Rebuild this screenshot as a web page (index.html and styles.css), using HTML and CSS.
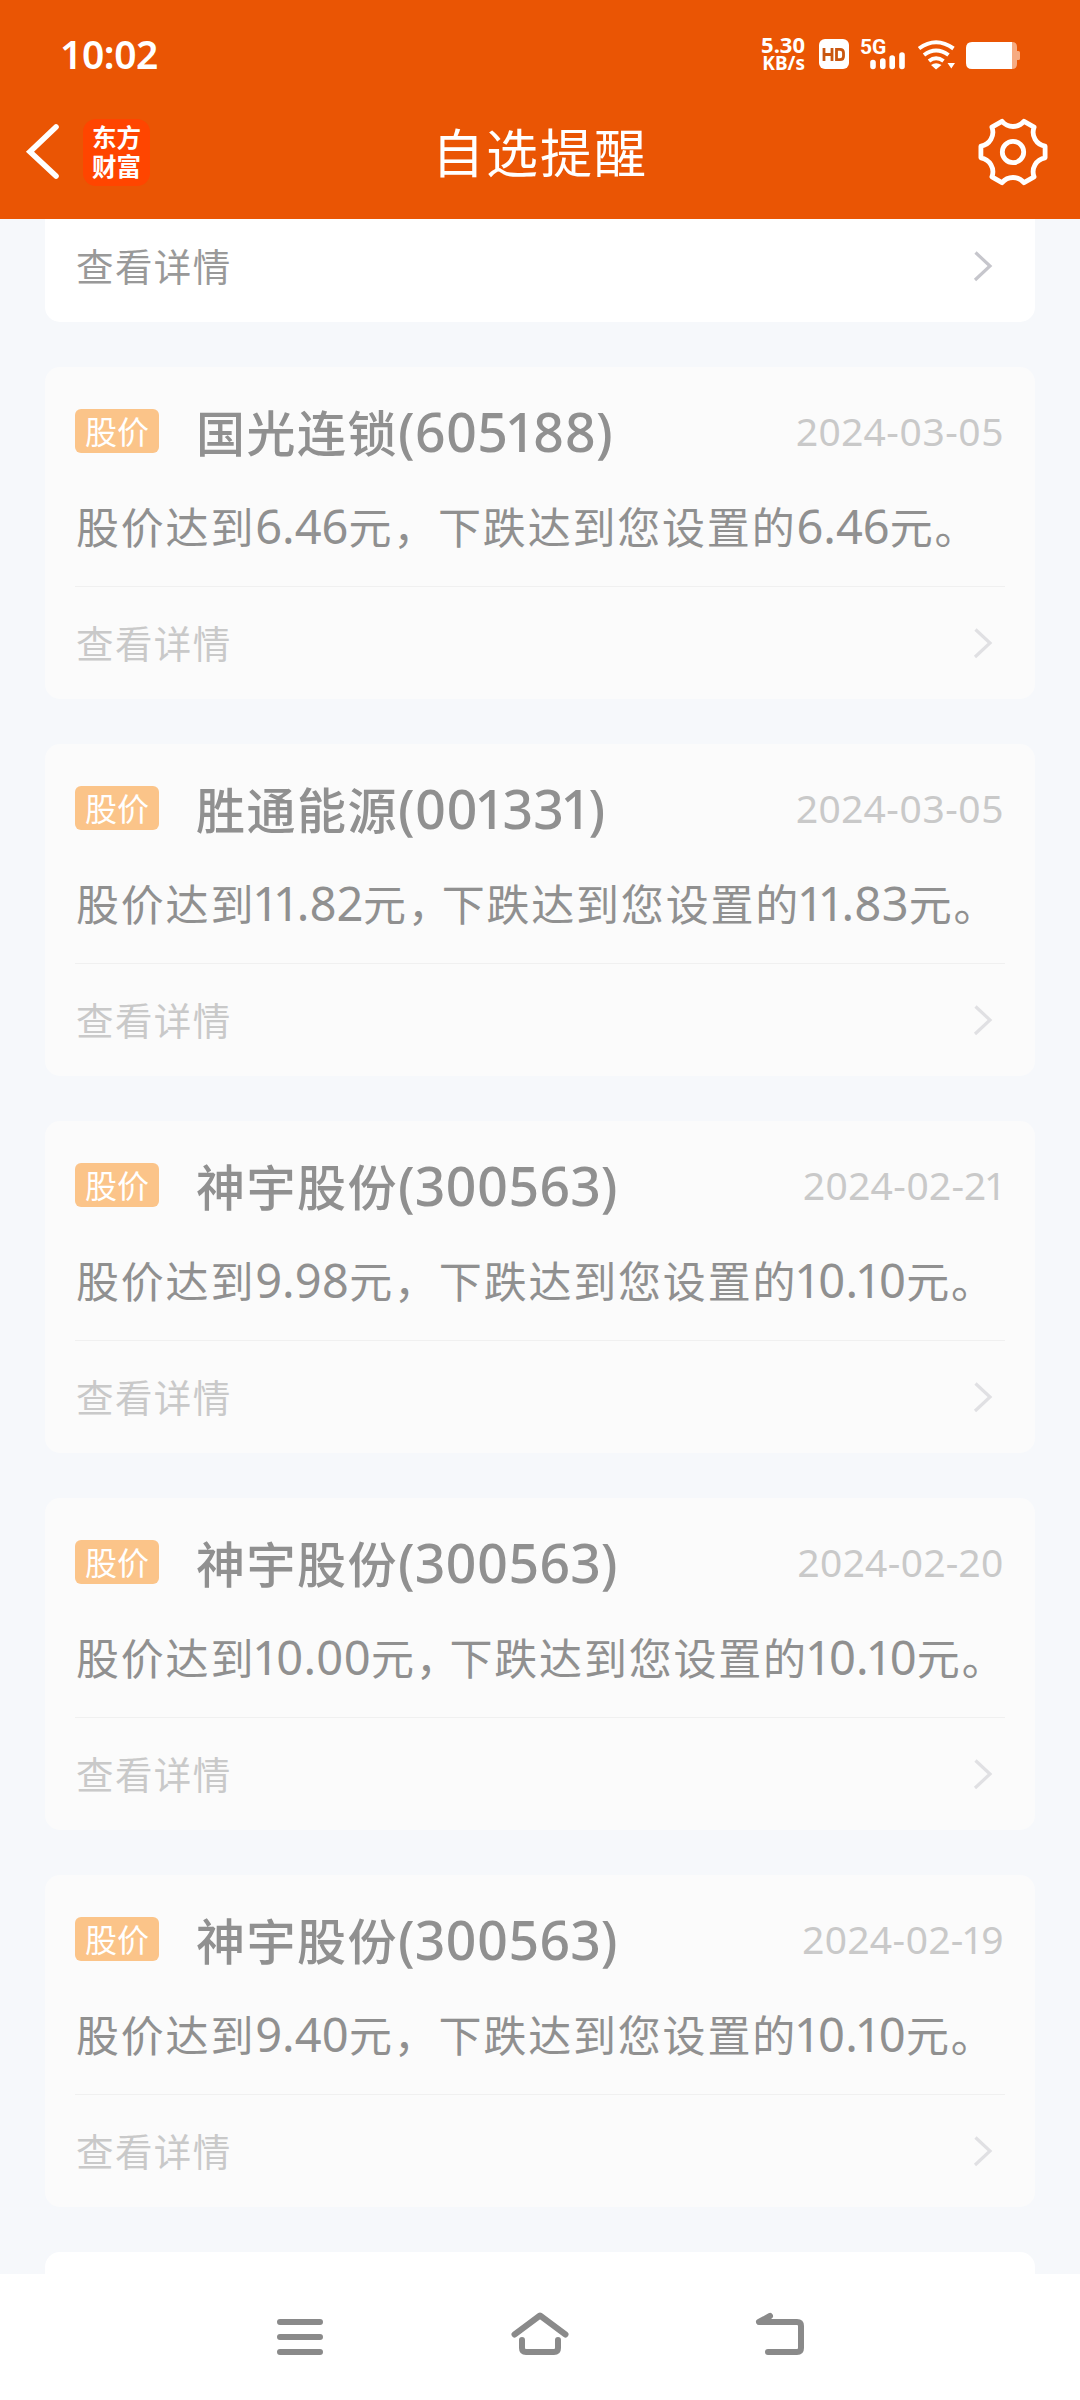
FILE: index.html
```html
<!DOCTYPE html>
<html lang="zh-CN">
<head>
<meta charset="utf-8">
<title>自选提醒</title>
<link rel="stylesheet" href="styles.css">
</head>
<body>
<div class="screen">
  <header class="header">
    <div class="status">
      <span class="clock">10:02</span>
      <div class="speed"><span class="speed-value">5.30</span><span class="speed-unit">KB/s</span></div>
      <svg class="status-icons" width="262" height="40" viewBox="818 34 262 40">
        <rect x="819" y="39" width="30" height="30" rx="6" fill="#fff"/>
        <path d="M824 48v13M832 48v13M824 54.5h8M836.500 49.300h3.500q3.500 0 3.500 3.500v3.400q0 3.500-3.500 3.500h-3.500z" fill="none" stroke="#c9560f" stroke-width="2.800"/>
        <text x="860" y="54" class="net">5G</text>
        <path d="M873 62.500v4M882.800 61v5.500M892.200 58v8.500M902 55v11.500" stroke="#fff" stroke-width="5.600" stroke-linecap="round" fill="none"/>
        <g fill="none" stroke="#fff" stroke-width="4">
          <path d="M919 48.500Q936 36 953.500 48.500"/>
          <path d="M924 55Q936 46 948.500 55"/>
          <path d="M929 61Q936 55.500 943.500 61"/>
        </g>
        <path d="M931 65Q936 61.500 941.500 65L936 69.500zM947.500 63h7.500l-3.700 5.500z" fill="#fff"/>
        <path d="M1011 42h1q5 0 5 5v4h1.500q1.500 0 1.500 1.500v6q0 1.500-1.500 1.500h-1.500v4q0 5-5 5h-1z" fill="#f6ab82"/>
        <path d="M1012 42h-40q-6 0-6 6v15q0 6 6 6h40z" fill="#fff"/>
      </svg>
    </div>
    <div class="titlebar">
      <div class="side">
        <svg width="40" height="60" viewBox="22 122 40 60"><path d="M56 127L30 151.700L56 176" fill="none" stroke="#fff" stroke-width="5.600" stroke-linecap="round"/></svg>
        <div class="logo"><span>东方</span><span>财富</span></div>
      </div>
      <h1 class="title">自选提醒</h1>
      <div class="side side-end">
        <svg width="72" height="72" viewBox="-36 -36 72 72" fill="none" stroke="#fff" stroke-width="4.800" stroke-linejoin="round">
          <circle r="10.700"/>
          <path d="M-11-30.700A14.200 14.200 0 0 0 11-30.700L21.100-24.900A14.200 14.200 0 0 0 32.100-5.800V5.800A14.200 14.200 0 0 0 21.100 24.900L11 30.700A14.200 14.200 0 0 0-11 30.700L-21.100 24.900A14.200 14.200 0 0 0-32.100 5.800V-5.800A14.200 14.200 0 0 0-21.100-24.900Z"/>
        </svg>
      </div>
    </div>
  </header>

  <main class="list">
    <section class="card card-tail">
      <div class="more"><span>查看详情</span><svg class="chev" width="20" height="32" viewBox="0 0 20 32"><path d="M2.500 2.500L17 16L2 30"/></svg></div>
    </section>

    <section class="card read">
      <div class="head"><span class="tag">股价</span><h2>国光连锁<span class="num">(605188)</span></h2><time>2024-03-05</time></div>
      <p>股价达到<span class="num">6.46</span>元，下跌达到您设置的<span class="num">6.46</span>元。</p>
      <div class="more"><span>查看详情</span><svg class="chev" width="20" height="32" viewBox="0 0 20 32"><path d="M2.500 2.500L17 16L2 30"/></svg></div>
    </section>

    <section class="card read">
      <div class="head"><span class="tag">股价</span><h2>胜通能源<span class="num">(001331)</span></h2><time>2024-03-05</time></div>
      <p>股价达到<span class="num">11.82</span>元<span class="tight">，</span>下跌达到您设置的<span class="num">11.83</span>元。</p>
      <div class="more"><span>查看详情</span><svg class="chev" width="20" height="32" viewBox="0 0 20 32"><path d="M2.500 2.500L17 16L2 30"/></svg></div>
    </section>

    <section class="card read">
      <div class="head"><span class="tag">股价</span><h2>神宇股份<span class="num">(300563)</span></h2><time>2024-02-21</time></div>
      <p>股价达到<span class="num">9.98</span>元，下跌达到您设置的<span class="num">10.10</span>元。</p>
      <div class="more"><span>查看详情</span><svg class="chev" width="20" height="32" viewBox="0 0 20 32"><path d="M2.500 2.500L17 16L2 30"/></svg></div>
    </section>

    <section class="card read">
      <div class="head"><span class="tag">股价</span><h2>神宇股份<span class="num">(300563)</span></h2><time>2024-02-20</time></div>
      <p>股价达到<span class="num">10.00</span>元<span class="tight">，</span>下跌达到您设置的<span class="num">10.10</span>元。</p>
      <div class="more"><span>查看详情</span><svg class="chev" width="20" height="32" viewBox="0 0 20 32"><path d="M2.500 2.500L17 16L2 30"/></svg></div>
    </section>

    <section class="card read">
      <div class="head"><span class="tag">股价</span><h2>神宇股份<span class="num">(300563)</span></h2><time>2024-02-19</time></div>
      <p>股价达到<span class="num">9.40</span>元，下跌达到您设置的<span class="num">10.10</span>元。</p>
      <div class="more"><span>查看详情</span><svg class="chev" width="20" height="32" viewBox="0 0 20 32"><path d="M2.500 2.500L17 16L2 30"/></svg></div>
    </section>

    <section class="card card-next"></section>
  </main>

  <nav class="nav">
    <svg width="60" height="60" viewBox="270 2304 60 60"><path d="M280 2322h40M280 2337h40M280 2352h40"/></svg>
    <svg width="60" height="60" viewBox="510 2304 60 60"><path d="M514.500 2334.500L540 2315.500L565.500 2334.500M522 2340v8q0 4 4 4h28q4 0 4-4v-8"/></svg>
    <svg width="60" height="60" viewBox="750 2304 60 60"><path d="M770 2316L759 2322H797q4 0 4 4v22q0 4-4 4H768"/></svg>
  </nav>
</div>
</body>
</html>
```
FILE: styles.css
```css
* { box-sizing: border-box; }
body {
  margin: 0;
  background: #f6f8fb;
  font-family: "Noto Sans CJK SC", sans-serif;
}
h1, h2, p { margin: 0; }
svg { display: block; flex: none; }
.screen {
  width: 1080px;
  height: 2400px;
  display: flex;
  flex-direction: column;
  overflow: hidden;
}

.header {
  height: 219px;
  flex: none;
  background: #ea5504;
  color: #fff;
}
.status {
  height: 108px;
  display: flex;
  align-items: center;
  padding-left: 60px;
}
.clock {
  flex: 1;
  font: 600 39px/40px "Noto Sans", sans-serif;
  letter-spacing: -0.4px;
}
.speed {
  display: flex;
  flex-direction: column;
  align-items: flex-end;
  margin: 0 13px 2px 0;
  font-family: "Noto Sans", sans-serif;
  font-weight: 700;
}
.speed-value { font-size: 22px; line-height: 19px; }
.speed-unit { font-size: 19px; line-height: 18px; }
.net { font: 700 21px Roboto, sans-serif; fill: #fff; }
.titlebar {
  height: 88px;
  display: flex;
  align-items: center;
  justify-content: space-between;
}
.side {
  width: 300px;
  padding-left: 22px;
  display: flex;
  align-items: center;
  gap: 21px;
}
.side-end {
  justify-content: flex-end;
  padding: 0 31px 0 0;
}
.logo {
  width: 67px;
  height: 67px;
  padding-bottom: 3px;
  border-radius: 13px;
  background: #ff4500;
  display: flex;
  flex-direction: column;
  align-items: center;
  justify-content: center;
  font-size: 24.5px;
  line-height: 29px;
  font-weight: 700;
}
.title {
  font-size: 52px;
  line-height: 86px;
  padding-bottom: 2px;
  font-weight: 400;
  letter-spacing: 2px;
}

.list {
  height: 2055px;
  flex: none;
  padding: 0 45px;
  display: flex;
  flex-direction: column;
  gap: 45px;
  overflow: hidden;
}
.card {
  flex: none;
  height: 332px;
  padding: 0 30px;
  border-radius: 15px;
  background: #fff;
  color: #999;
}
.card-tail {
  height: 103px;
  display: flex;
  flex-direction: column;
  justify-content: flex-end;
  border-radius: 0 0 15px 15px;
}
.card-next { height: 60px; }
.read {
  background: #fbfbfb;
  color: #909090;
  padding-top: 31px;
}
.head {
  height: 66px;
  display: flex;
  align-items: center;
}
.tag {
  width: 84px;
  height: 44px;
  border-radius: 6px;
  background: #fbc489;
  color: #fff;
  font-size: 32px;
  line-height: 42px;
  text-align: center;
}
h2 {
  flex: 1;
  margin-left: 37px;
  font-size: 49px;
  line-height: 66px;
  font-weight: 500;
  letter-spacing: 1.5px;
  white-space: nowrap;
}
.num {
  font-family: "Noto Sans", sans-serif;
  font-variant-numeric: proportional-nums;
  letter-spacing: 0;
}
h2 .num { font-size: 53.5px; }
p .num { font-size: 47px; }
time {
  font: 400 39px/66px "Noto Sans", sans-serif;
  font-variant-numeric: proportional-nums;
  letter-spacing: 0.4px;
  margin-right: 1px;
  color: #c9c9c9;
}
p {
  height: 122px;
  padding-left: 1px;
  font-size: 43px;
  line-height: 122px;
  letter-spacing: 1.8px;
  white-space: nowrap;
}
.tight {
  font-feature-settings: "halt";
  margin-right: 10.5px;
}
.more {
  height: 112px;
  flex: none;
  display: flex;
  align-items: center;
  justify-content: space-between;
  padding: 0 12px 0 1px;
  font-size: 37.5px;
  line-height: 108px;
  letter-spacing: 1.4px;
}
.more span { padding-bottom: 2px; }
.read .more {
  border-top: 1px solid #f0f0f0;
  color: #c9c9c9;
}
.chev path {
  fill: none;
  stroke: #c6c6cc;
  stroke-width: 3.2;
}
.read .chev path { stroke: #e0e0e3; }

.nav {
  flex: 1;
  padding: 30px 0 0 270px;
  display: flex;
  gap: 180px;
  background: #fff;
}
.nav path {
  fill: none;
  stroke: #8a8a8a;
  stroke-width: 6;
  stroke-linecap: round;
  stroke-linejoin: round;
}
```
